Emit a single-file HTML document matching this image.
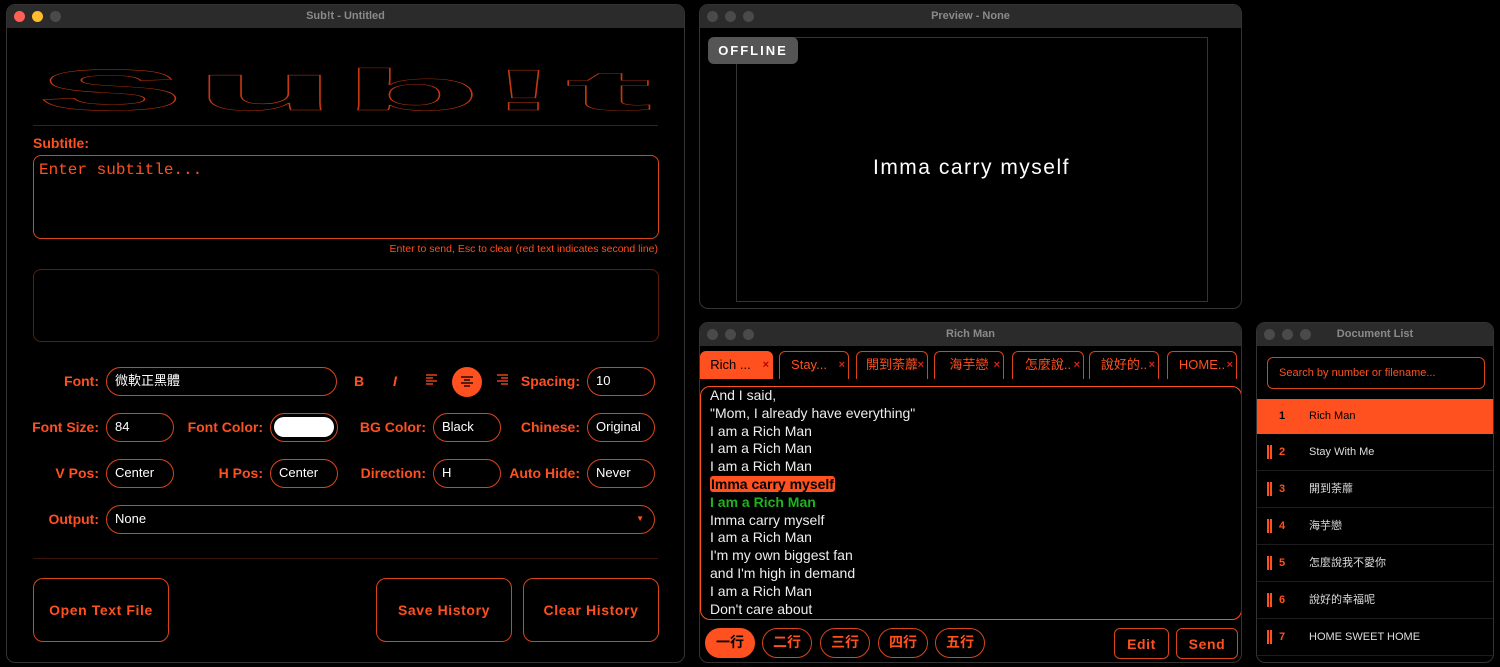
<!DOCTYPE html>
<html><head><meta charset="utf-8"><style>
*{box-sizing:border-box;margin:0;padding:0}
body{width:1500px;height:667px;background:#000;position:relative;overflow:hidden;font-family:"Liberation Sans","Noto Sans CJK TC",sans-serif;color:#fff}
.win{position:absolute;background:#000;border:1px solid #333;border-radius:9px;overflow:hidden}
.tb{height:23px;background:#2b2b2b;color:#8a8a8a;font-size:11px;font-weight:bold;text-align:center;line-height:22px;position:relative}
.dots{position:absolute;left:7px;top:6px;display:flex;gap:7px}
.dots i{display:block;width:11px;height:11px;border-radius:50%;background:#4a4a4a}
.a{position:absolute}
.o{color:#ff5020}
.lbl{position:absolute;color:#ff5020;font-weight:bold;font-size:14px;text-align:right;line-height:28px}
.in{position:absolute;border:1.5px solid #d9441a;border-radius:15px;height:29px;line-height:26px;padding-left:8px;font-size:13px;color:#fff}
.btn{position:absolute;border:1.5px solid #d9441a;border-radius:10px;color:#ff5020;font-weight:bold;font-size:14px;letter-spacing:0.6px;display:flex;align-items:center;justify-content:center}
.tab{position:absolute;top:28px;height:28px;border:1.5px solid #d9441a;border-bottom:none;border-radius:6px 6px 0 0;color:#ff5020;font-size:13px;line-height:26px;text-align:center}
.tab b{position:absolute;right:3px;top:0;color:#e0201a;font-size:11px}
.ln{font-size:14px;line-height:17.8px;color:#eee}
.pill{position:absolute;top:305px;height:30px;width:50px;border:1.5px solid #d9441a;border-radius:15px;color:#ff5020;font-size:14px;font-weight:bold;text-align:center;line-height:27px}
.row{position:absolute;left:0;width:238px;height:37px;border-bottom:1px solid #1c1c1c;font-size:11px;line-height:36px}
.row .n{position:absolute;left:22px;color:#ff5020;font-weight:bold}
.row .bar{position:absolute;left:10px;top:11px;width:5px;height:14px;border-left:2px solid #ff5020;border-right:2px solid #ff5020}
.row .t{position:absolute;left:52px;color:#ddd}
.lg text{vector-effect:non-scaling-stroke}
</style></head><body>

<!-- main window -->
<div class="win" style="left:6px;top:4px;width:679px;height:659px">
 <div class="tb"><div class="dots"><i style="background:#fe5f57"></i><i style="background:#febc2e"></i><i></i></div>Sub!t - Untitled</div>
 <svg class="a" style="left:0;top:0" width="679" height="130">
  <g class="lg" fill="none" stroke="#c8380f" stroke-width="1.2" font-family="Liberation Sans" font-weight="bold">
   <text vector-effect="non-scaling-stroke" transform="translate(30,105) scale(3.8,1)" font-size="58">S</text>
   <text vector-effect="non-scaling-stroke" transform="translate(188,105) scale(3.5,1)" font-size="66">u</text>
   <text vector-effect="non-scaling-stroke" transform="translate(336,105) scale(3.9,1)" font-size="58">b</text>
   <text vector-effect="non-scaling-stroke" transform="translate(482,105) scale(3.6,1)" font-size="58">!</text>
   <text vector-effect="non-scaling-stroke" transform="translate(558,105) scale(4.7,1)" font-size="56">t</text>
  </g>
  <line x1="26" y1="120.5" x2="651" y2="120.5" stroke="#4a1a0c"/>
 </svg>
 <div class="a o" style="left:26px;top:130px;font-size:14px;font-weight:bold">Subtitle:</div>
 <div class="a" style="left:26px;top:150px;width:626px;height:84px;border:1.5px solid #d9441a;border-radius:8px;padding:5px 5px;font-family:'Liberation Mono',monospace;font-size:16px;color:#ff5020">Enter subtitle...</div>
 <div class="a o" style="right:26px;top:238px;font-size:10.5px">Enter to send, Esc to clear (red text indicates second line)</div>
 <div class="a" style="left:26px;top:264px;width:626px;height:73px;border:1px solid #5a1e0c;border-radius:8px"></div>

 <div class="lbl" style="right:585px;top:362px">Font:</div>
 <div class="in" style="left:99px;top:362px;width:231px">微軟正黑體</div>
 <div class="a o" style="left:347px;top:368px;font-size:14px;font-weight:bold">B</div>
 <div class="a o" style="left:386px;top:368px;font-size:14px;font-weight:bold;font-style:italic">I</div>
 <svg class="a" style="left:419px;top:369px" width="12" height="12"><g stroke="#ff5020" stroke-width="1.3"><line x1="0" y1="1" x2="11" y2="1"/><line x1="0" y1="4" x2="7" y2="4"/><line x1="0" y1="7" x2="11" y2="7"/><line x1="0" y1="10" x2="7" y2="10"/></g></svg>
 <div class="a" style="left:445px;top:362px;width:30px;height:30px;border-radius:50%;background:#ff5020"></div>
 <svg class="a" style="left:454px;top:371px" width="12" height="12"><g stroke="#000" stroke-width="1.3"><line x1="0" y1="1" x2="12" y2="1"/><line x1="3" y1="4" x2="9" y2="4"/><line x1="0" y1="7" x2="12" y2="7"/><line x1="3" y1="10" x2="9" y2="10"/></g></svg>
 <svg class="a" style="left:490px;top:369px" width="12" height="12"><g stroke="#ff5020" stroke-width="1.3"><line x1="0" y1="1" x2="11" y2="1"/><line x1="4" y1="4" x2="11" y2="4"/><line x1="0" y1="7" x2="11" y2="7"/><line x1="4" y1="10" x2="11" y2="10"/></g></svg>
 <div class="lbl" style="right:104px;top:362px">Spacing:</div>
 <div class="in" style="left:580px;top:362px;width:68px">10</div>

 <div class="lbl" style="right:585px;top:408px">Font Size:</div>
 <div class="in" style="left:99px;top:408px;width:68px">84</div>
 <div class="lbl" style="right:421px;top:408px">Font Color:</div>
 <div class="in" style="left:263px;top:408px;width:68px;padding:3px"><div style="background:#fff;border-radius:11px;height:20px"></div></div>
 <div class="lbl" style="right:258px;top:408px">BG Color:</div>
 <div class="in" style="left:426px;top:408px;width:68px">Black</div>
 <div class="lbl" style="right:104px;top:408px">Chinese:</div>
 <div class="in" style="left:580px;top:408px;width:68px">Original</div>

 <div class="lbl" style="right:585px;top:454px">V Pos:</div>
 <div class="in" style="left:99px;top:454px;width:68px">Center</div>
 <div class="lbl" style="right:421px;top:454px">H Pos:</div>
 <div class="in" style="left:263px;top:454px;width:68px">Center</div>
 <div class="lbl" style="right:258px;top:454px">Direction:</div>
 <div class="in" style="left:426px;top:454px;width:68px">H</div>
 <div class="lbl" style="right:104px;top:454px">Auto Hide:</div>
 <div class="in" style="left:580px;top:454px;width:68px">Never</div>

 <div class="lbl" style="right:585px;top:500px">Output:</div>
 <div class="in" style="left:99px;top:500px;width:549px">None<span style="position:absolute;right:10px;font-size:8px;color:#ff5020">▼</span></div>

 <div class="a" style="left:26px;top:553px;width:625px;height:1px;background:#3a140a"></div>
 <div class="btn" style="left:26px;top:573px;width:136px;height:64px">Open Text File</div>
 <div class="btn" style="left:369px;top:573px;width:136px;height:64px">Save History</div>
 <div class="btn" style="left:516px;top:573px;width:136px;height:64px">Clear History</div>
</div>

<!-- preview -->
<div class="win" style="left:699px;top:4px;width:543px;height:305px">
 <div class="tb"><div class="dots"><i></i><i></i><i></i></div>Preview - None</div>
 <div class="a" style="left:36px;top:32px;width:472px;height:265px;border:1px solid #333"></div>
 <div class="a" style="left:8px;top:32px;width:90px;height:27px;background:#555;border-radius:6px;color:#fff;font-weight:bold;font-size:13px;letter-spacing:2px;text-align:center;line-height:27px">OFFLINE</div>
 <div class="a" style="left:0;width:543px;top:151px;text-align:center;font-size:21px;letter-spacing:1.5px;color:#fff">Imma carry myself</div>
</div>

<!-- rich man -->
<div class="win" style="left:699px;top:322px;width:543px;height:341px">
 <div class="tb"><div class="dots"><i></i><i></i><i></i></div>Rich Man</div>
 <div class="tab" style="left:0;width:73px;background:#ff5020;border-color:#ff5020;color:#000"><span style="margin-right:12px">Rich ...</span><b style="color:#b00">×</b></div>
 <div class="tab" style="left:79px;width:70px"><span style="margin-right:10px">Stay...</span><b>×</b></div>
 <div class="tab" style="left:156px;width:72px">開到荼蘼<b>×</b></div>
 <div class="tab" style="left:234px;width:70px">海芋戀<b>×</b></div>
 <div class="tab" style="left:312px;width:72px">怎麼說..<b>×</b></div>
 <div class="tab" style="left:389px;width:70px">說好的..<b>×</b></div>
 <div class="tab" style="left:467px;width:70px">HOME..<b>×</b></div>
 <div class="a" style="left:0;top:63px;width:542px;height:234px;border:1.5px solid #ff5020;border-radius:10px;padding:0 9px">
  <div class="ln">And I said,</div>
  <div class="ln">"Mom, I already have everything"</div>
  <div class="ln">I am a Rich Man</div>
  <div class="ln">I am a Rich Man</div>
  <div class="ln">I am a Rich Man</div>
  <div class="ln"><span style="background:#ff5020;color:#000;font-weight:bold;border-radius:3px;padding:0 1px">Imma carry myself</span></div>
  <div class="ln" style="color:#1db31d;font-weight:bold">I am a Rich Man</div>
  <div class="ln">Imma carry myself</div>
  <div class="ln">I am a Rich Man</div>
  <div class="ln">I'm my own biggest fan</div>
  <div class="ln">and I'm high in demand</div>
  <div class="ln">I am a Rich Man</div>
  <div class="ln">Don't care about</div>
 </div>
 <div class="pill" style="left:5px;background:#ff5020;color:#000;border-color:#ff5020">一行</div>
 <div class="pill" style="left:62px">二行</div>
 <div class="pill" style="left:120px">三行</div>
 <div class="pill" style="left:178px">四行</div>
 <div class="pill" style="left:235px">五行</div>
 <div class="btn" style="left:414px;top:305px;width:55px;height:31px;border-radius:6px">Edit</div>
 <div class="btn" style="left:476px;top:305px;width:62px;height:31px;border-radius:6px">Send</div>
</div>

<!-- doc list -->
<div class="win" style="left:1256px;top:322px;width:238px;height:341px">
 <div class="tb"><div class="dots"><i></i><i></i><i></i></div>Document List</div>
 <div class="a" style="left:10px;top:34px;width:218px;height:32px;border:1px solid #d9441a;border-radius:6px;color:#ff5020;font-size:11px;line-height:30px;padding-left:11px">Search by number or filename...</div>
 <div class="row" style="top:76px;height:35px;background:#ff5020;border:none;line-height:35px"><span class="n" style="color:#000">1</span><span class="t" style="color:#000">Rich Man</span></div>
 <div class="row" style="top:111px"><span class="bar"></span><span class="n">2</span><span class="t">Stay With Me</span></div>
 <div class="row" style="top:148px"><span class="bar"></span><span class="n">3</span><span class="t">開到荼蘼</span></div>
 <div class="row" style="top:185px"><span class="bar"></span><span class="n">4</span><span class="t">海芋戀</span></div>
 <div class="row" style="top:222px"><span class="bar"></span><span class="n">5</span><span class="t">怎麼說我不愛你</span></div>
 <div class="row" style="top:259px"><span class="bar"></span><span class="n">6</span><span class="t">說好的幸福呢</span></div>
 <div class="row" style="top:296px"><span class="bar"></span><span class="n">7</span><span class="t">HOME SWEET HOME</span></div>
</div>
</body></html>
